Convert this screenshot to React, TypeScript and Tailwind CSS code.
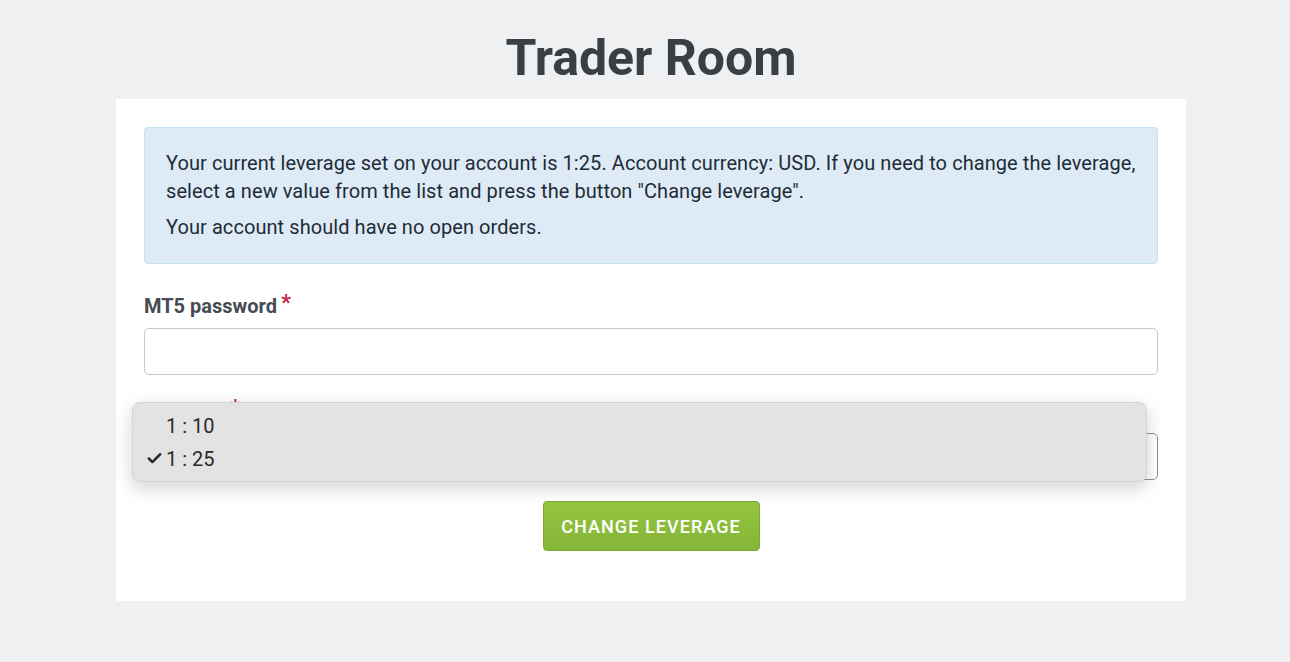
import { Check } from 'lucide-react';

const LEVERAGE_OPTIONS = ['1 : 10', '1 : 25'];

function RequiredMark() {
  return <span className="ml-1 align-top text-[22px] leading-none text-[#c7254e]">*</span>;
}

function LeverageMenu({ selected }: { selected: string }) {
  return (
    <div className="absolute left-[-12px] top-[-31px] z-10 w-[1015px] rounded-[8px] border border-[#d4d4d4] bg-[#e3e3e3] py-[6px] shadow-[0_6px_18px_rgba(0,0,0,0.18)]">
      {LEVERAGE_OPTIONS.map((opt) => (
        <div key={opt} className="flex h-[33px] items-center pl-[13px] text-[20px] text-[#2a2a2a]">
          <span className="flex w-[20px] items-center">
            {opt === selected && <Check className="h-[17px] w-[17px]" strokeWidth={3.5} />}
          </span>
          {opt}
        </div>
      ))}
    </div>
  );
}

export default function App() {
  return (
    <div className="min-h-[662px] bg-[#eff0f2] pl-[12px] font-['Roboto',sans-serif]">
      <h1 className="pt-[28px] pb-[10px] text-center text-[50px] font-bold leading-[61px] text-[#3a3f46]">Trader Room</h1>
      <div className="mx-auto w-[1070px] bg-white px-[28px] pt-[28px] pb-[50px]">
        <div className="rounded-[4px] border border-[#c4e1f0] bg-[#deebf7] px-[21px] pt-[21px] pb-[22px] text-[20px] leading-[28px] tracking-[0.07px] text-[#222b35]">
          <p>
            Your current leverage set on your account is 1:25. Account currency: USD. If you need to change the leverage,
            select a new value from the list and press the button "Change leverage".
          </p>
          <p className="mt-[8px]">Your account should have no open orders.</p>
        </div>

        <label className="mt-[28px] block text-[20px] font-bold leading-[28px] text-[#454b53]">
          MT5 password
          <RequiredMark />
        </label>
        <input
          type="password"
          className="mt-[8px] block h-[47px] w-full rounded-[5px] border border-[#c8c8c8] bg-white px-3 text-[18px] outline-none"
        />

        <label className="mt-[22px] block text-[20px] font-bold leading-[28px] text-[#454b53]">
          Leverage
          <RequiredMark />
        </label>
        <div className="relative mt-[8px]">
          <div className="h-[47px] w-full rounded-[5px] border border-[#8a9099] bg-white" />
          <LeverageMenu selected="1 : 25" />
        </div>

        <div className="mt-[21px] flex justify-center">
          <button
            type="button"
            className="h-[50px] w-[217px] rounded-[4px] border border-[#7aab2e] bg-gradient-to-b from-[#95c442] to-[#84b536] text-[18px] font-medium uppercase tracking-[0.06em] text-white"
          >
            Change leverage
          </button>
        </div>
      </div>
    </div>
  );
}
